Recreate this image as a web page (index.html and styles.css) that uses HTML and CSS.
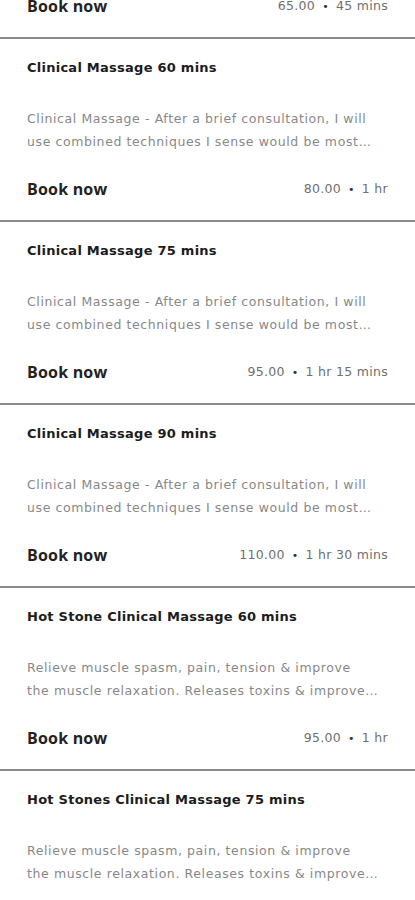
FILE: index.html
```html
<!DOCTYPE html>
<html lang="en">
  <head>
    <meta charset="UTF-8" />
    <meta name="viewport" content="width=device-width, initial-scale=1.0" />
    <title>Services</title>
    <link rel="stylesheet" href="styles.css">
  </head>
  <body>
    <main class="service-list">
      <!-- list is scrolled: the first item is only partly in view -->
      <div class="service-item">
        <div class="service-title">Deep Tissue Massage 45 mins</div>
        <p class="service-desc">Deep Tissue Massage - After a brief consultation, I will use combined techniques I sense would be most…</p>
        <div class="service-footer">
          <span class="book-link">Book now</span>
          <span class="service-meta">65.00<span class="dot">&bull;</span>45 mins</span>
        </div>
      </div>

      <div class="service-item">
        <div class="service-title">Clinical Massage 60 mins</div>
        <p class="service-desc">Clinical Massage - After a brief consultation, I will use combined techniques I sense would be most…</p>
        <div class="service-footer">
          <span class="book-link">Book now</span>
          <span class="service-meta">80.00<span class="dot">&bull;</span>1 hr</span>
        </div>
      </div>

      <div class="service-item">
        <div class="service-title">Clinical Massage 75 mins</div>
        <p class="service-desc">Clinical Massage - After a brief consultation, I will use combined techniques I sense would be most…</p>
        <div class="service-footer">
          <span class="book-link">Book now</span>
          <span class="service-meta">95.00<span class="dot">&bull;</span>1 hr 15 mins</span>
        </div>
      </div>

      <div class="service-item">
        <div class="service-title">Clinical Massage 90 mins</div>
        <p class="service-desc">Clinical Massage - After a brief consultation, I will use combined techniques I sense would be most…</p>
        <div class="service-footer">
          <span class="book-link">Book now</span>
          <span class="service-meta">110.00<span class="dot">&bull;</span>1 hr 30 mins</span>
        </div>
      </div>

      <div class="service-item">
        <div class="service-title">Hot Stone Clinical Massage 60 mins</div>
        <p class="service-desc">Relieve muscle spasm, pain, tension &amp; improve<br>the muscle relaxation. Releases toxins &amp; improve…</p>
        <div class="service-footer">
          <span class="book-link">Book now</span>
          <span class="service-meta">95.00<span class="dot">&bull;</span>1 hr</span>
        </div>
      </div>

      <div class="service-item">
        <div class="service-title">Hot Stones Clinical Massage 75 mins</div>
        <p class="service-desc">Relieve muscle spasm, pain, tension &amp; improve<br>the muscle relaxation. Releases toxins &amp; improve…</p>
        <div class="service-footer">
          <span class="book-link">Book now</span>
          <span class="service-meta">110.00<span class="dot">&bull;</span>1 hr 15 mins</span>
        </div>
      </div>
    </main>
  </body>
</html>
```

FILE: styles.css
```css
body {
  font-family: "DejaVu Sans", "Liberation Sans", sans-serif;
  margin: 0;
  background-color: #fff;
  color: #1a1a1a;
}
.service-list {
  margin-top: -146px;
}
.service-item {
  border-top: 2px solid #8a8a8a;
  padding: 19px 27px 21px;
}
.service-item:first-child {
  border-top: none;
  padding-top: 21px;
}
.service-title {
  font-size: 13px;
  font-weight: 700;
  letter-spacing: 0.25px;
  line-height: 20px;
  color: #1c1c1c;
}
.service-desc {
  margin: 29px 2px 0 0;
  font-size: 12.5px;
  letter-spacing: 0.6px;
  line-height: 23px;
  color: #888;
  height: 46px;
  overflow: hidden;
}
.service-footer {
  display: flex;
  justify-content: space-between;
  align-items: flex-end;
  margin-top: 24px;
  height: 22px;
}
.book-link {
  font-family: "Open Sans", "DejaVu Sans", sans-serif;
  font-size: 16px;
  font-weight: 700;
  letter-spacing: 0.2px;
  line-height: 20px;
  color: #222;
}
.service-meta {
  font-size: 12.5px;
  letter-spacing: 0.3px;
  line-height: 18px;
  color: #6f6f6f;
}
.dot {
  font-size: 11px;
  color: #333;
  margin: 0 7px;
}
```
